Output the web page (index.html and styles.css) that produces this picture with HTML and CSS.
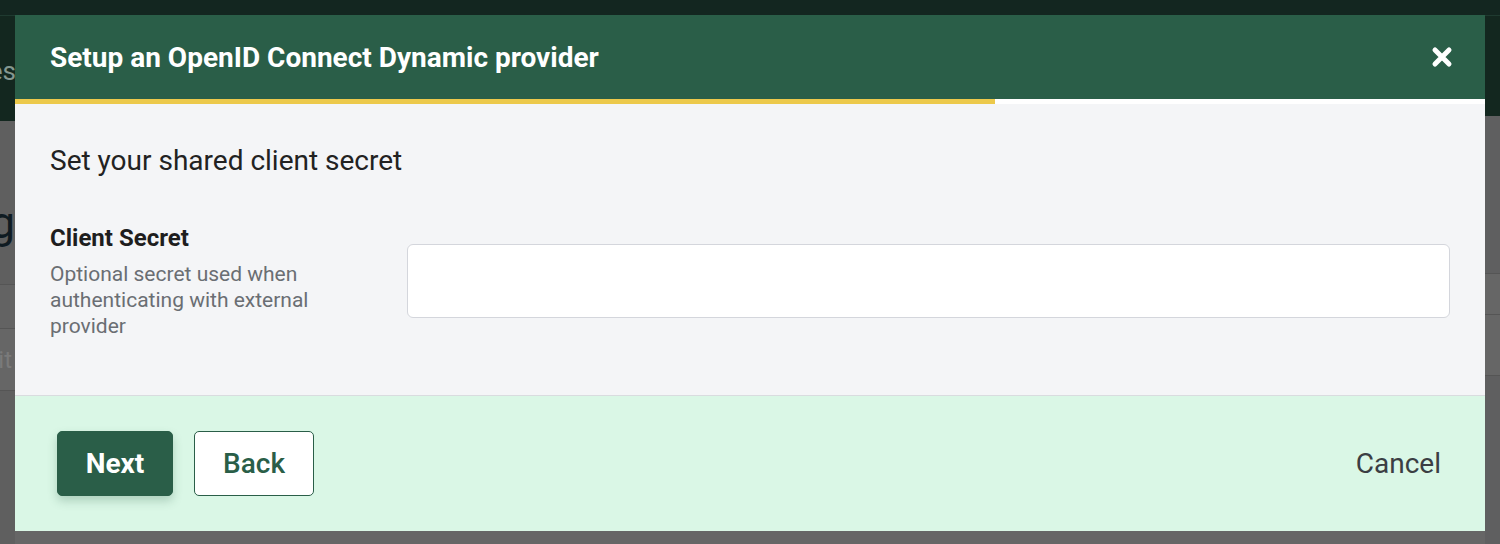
FILE: index.html
```html
<!DOCTYPE html>
<html lang="en">
<head>
<meta charset="utf-8">
<title>Setup an OpenID Connect Dynamic provider</title>
<link rel="stylesheet" href="styles.css">
</head>
<body>
<div class="backdrop">
  <div class="topbar"></div>
  <div class="cols">
    <div class="col col-left">
      <div class="masthead"><span class="mast-text">Identities</span></div>
      <div class="page">
        <div class="page-title">Listing</div>
        <div class="page-row page-row-a"></div>
        <div class="page-row page-row-b"><span class="row-text">Edit</span></div>
      </div>
    </div>
    <div class="col col-right">
      <div class="masthead masthead-short"></div>
      <div class="page page-right">
        <div class="band"></div>
        <div class="rrow rrow-a"></div>
        <div class="rrow rrow-b"></div>
      </div>
    </div>
  </div>
</div>

<div class="modal" role="dialog" aria-labelledby="modal-title">
  <header class="modal-header">
    <h1 id="modal-title" class="modal-title">Setup an OpenID Connect Dynamic provider</h1>
    <button class="close-btn" aria-label="Close">
      <svg width="22" height="22" viewBox="0 0 22 22"><path d="M4 4 L18 18 M18 4 L4 18" stroke="#fff" stroke-width="5" stroke-linecap="round" fill="none"/></svg>
    </button>
  </header>
  <div class="progress"><div class="progress-fill" style="width: 66.67%"></div></div>
  <section class="modal-body">
    <h2 class="step-title">Set your shared client secret</h2>
    <div class="field">
      <div class="field-label">
        <label class="label" for="secret">Client Secret</label>
        <p class="hint">Optional secret used when authenticating with external provider</p>
      </div>
      <input id="secret" class="input" type="text">
    </div>
  </section>
  <footer class="modal-footer">
    <div class="actions">
      <button class="btn btn-primary">Next</button>
      <button class="btn btn-secondary">Back</button>
    </div>
    <button class="btn btn-link">Cancel</button>
  </footer>
</div>
</body>
</html>
```
FILE: styles.css
```css
* { box-sizing: border-box; }
html, body { margin: 0; padding: 0; }
body {
  width: 1500px;
  height: 544px;
  overflow: hidden;
  font-family: Roboto, "Liberation Sans", sans-serif;
  background: #666666;
  position: relative;
}

/* ---------- dimmed page behind the dialog ---------- */
.backdrop { height: 544px; display: flex; flex-direction: column; }
.topbar { height: 16px; background: #132620; border-bottom: 1px solid #1f3a30; }
.cols { flex: 1; display: flex; justify-content: space-between; }
.col { width: 15px; overflow: hidden; display: flex; flex-direction: column; }
.masthead {
  height: 105px; background: #13271f;
  display: flex; justify-content: flex-end; align-items: center;
}
.masthead-short { height: 100px; }
.mast-text { font-size: 26px; color: #849790; white-space: nowrap; padding-top: 4px; margin-right: -1px; }
.page { flex: 1; background: #5f5f5f; display: flex; flex-direction: column; }
.page-title {
  height: 163px; display: flex; justify-content: flex-end; align-items: center;
  font-size: 44px; color: #0f1b22; white-space: nowrap; padding-top: 40px;
}
.page-row { border-top: 1px solid #555; }
.page-row-a { height: 44px; background: #636363; }
.page-row-b {
  height: 63px; background: #666;
  display: flex; justify-content: flex-end; align-items: center;
  font-size: 24px; color: #7a7a7a; white-space: nowrap; padding-right: 3px;
  border-bottom: 1px solid #555;
}
.page-right { background: #5f5f60; }
.band { height: 157px; }
.rrow { border-top: 1px solid #555; background: #666; }
.rrow-a { height: 41px; }
.rrow-b { height: 62px; border-bottom: 1px solid #555; }

/* ---------- dialog ---------- */
.modal {
  position: absolute;
  top: 15px; left: 15px;
  width: 1470px; height: 516px;
  display: flex; flex-direction: column;
  background: #f4f5f7;
}
.modal-header {
  height: 84px; background: #2a5e48;
  display: flex; align-items: center; justify-content: space-between;
  padding: 0 32px 0 35px;
}
.modal-title {
  margin: 0; color: #fff; font-size: 28px; font-weight: 700; letter-spacing: 0;
  padding-top: 1px;
}
.close-btn {
  border: 0; background: transparent; padding: 0; width: 22px; height: 22px;
  display: flex; cursor: pointer;
}
.progress { height: 5px; background: #fff; }
.progress-fill { height: 100%; background: #ecc94b; }

.modal-body { flex: 1; padding: 40px 35px 0 35px; }
.step-title { margin: 0; font-size: 28px; font-weight: 400; color: #222; line-height: 34px; }
.field {
  margin-top: 45px;
  display: flex; align-items: center; gap: 35px;
}
.field-label { width: 322px; flex: none; }
.label { display: block; font-size: 24px; font-weight: 700; color: #1e1e1e; line-height: 30px; }
.hint { margin: 8px 0 0; font-size: 21px; color: #6a6e73; line-height: 26px; }
.input {
  flex: 1; height: 74px;
  border: 1px solid #d4d6dc; border-radius: 6px; background: #fff;
  font: inherit; font-size: 20px; padding: 0 16px;
}

.modal-footer {
  height: 136px; background: #daf7e6; border-top: 1px solid #d9dcdf;
  display: flex; align-items: center; justify-content: space-between;
  padding: 0 28px 1px 42px;
}
.actions { display: flex; gap: 21px; }
.btn {
  font-family: inherit; font-size: 28px; height: 65px; border-radius: 5px; cursor: pointer;
}
.btn-primary {
  width: 116px; background: #2a5e48; color: #fff; border: 1px solid #2a5e48; font-weight: 700;
  box-shadow: 0 5px 10px rgba(42, 94, 72, 0.25);
}
.btn-secondary {
  width: 120px; background: #fff; color: #2a5e48; border: 1px solid #2a5e48; font-weight: 500;
}
.btn-link {
  background: transparent; border: 0; color: #3b3e43; font-weight: 400; padding: 0 16px;
}
```
